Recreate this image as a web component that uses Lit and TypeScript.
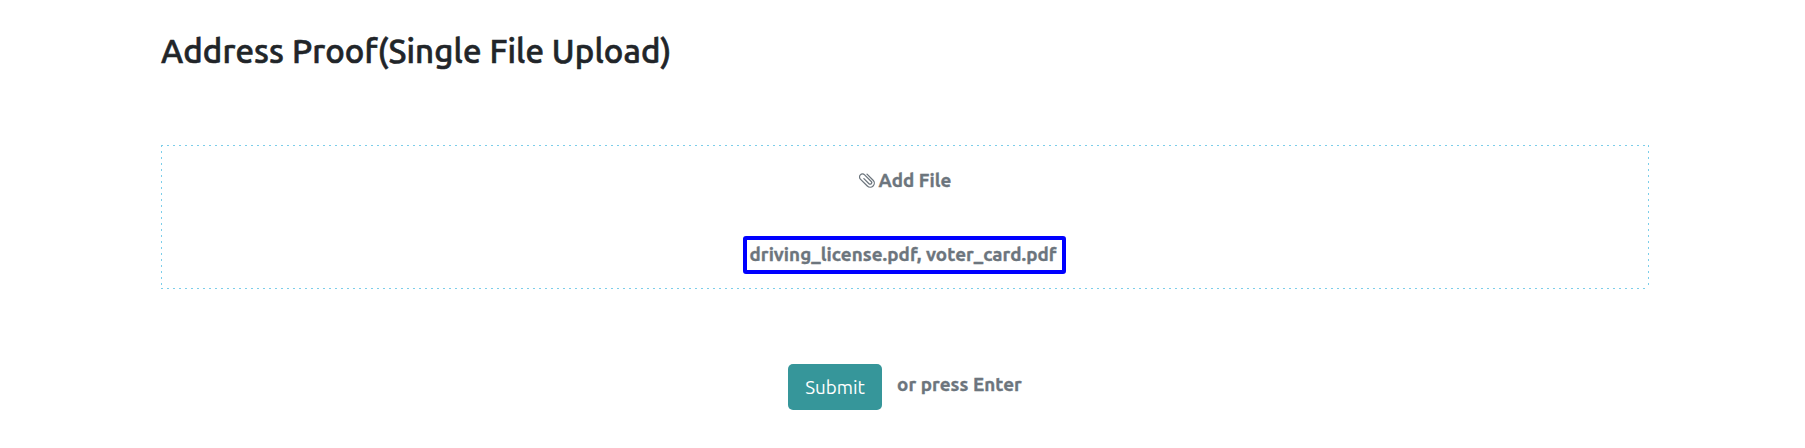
import { LitElement, html, css } from "lit";
import { customElement } from "lit/decorators.js";

@customElement("app-root")
export class AppRoot extends LitElement {
  static styles = css`
    :host {
      display: block;
      box-sizing: border-box;
      height: 448px;
      padding: 26px 156px 0 161px;
      background: #fff;
      color: #6c757d;
      font-family: Ubuntu, "Noto Sans", "Open Sans", sans-serif;
      overflow: hidden;
    }
    h2 {
      margin: 0;
      height: 119px;
      line-height: 50px;
      font-size: 33px;
      font-weight: 500;
      -webkit-text-stroke: 0.6px #212529;
      letter-spacing: 0.12px;
      color: #212529;
      white-space: nowrap;
    }
    .drop {
      box-sizing: border-box;
      height: 144px;
      display: flex;
      flex-direction: column;
      align-items: center;
      --dash: #7cceea;
      background:
        repeating-linear-gradient(90deg, var(--dash) 0 2px, transparent 2px 6px) top / 100% 1px no-repeat,
        repeating-linear-gradient(90deg, var(--dash) 0 2px, transparent 2px 6px) bottom / 100% 1px no-repeat,
        repeating-linear-gradient(180deg, var(--dash) 0 2px, transparent 2px 6px) left / 1px 100% no-repeat,
        repeating-linear-gradient(180deg, var(--dash) 0 2px, transparent 2px 6px) right / 1px 100% no-repeat;
    }
    .add,
    .files,
    .hint {
      font-size: 18.8px;
      font-weight: 700;
      letter-spacing: 0.08px;
      white-space: nowrap;
      -webkit-text-stroke: 0.35px #6c757d;
    }
    .add {
      display: flex;
      align-items: center;
      height: 30px;
      margin-top: 20px;
      gap: 4px;
    }
    .add svg { width: 16px; height: 16px; display: block; }
    .files {
      box-sizing: border-box;
      width: 323px;
      height: 38px;
      margin: 41px 2px 0 0;
      border: 4px solid #00f;
      border-radius: 3px;
      line-height: 29px;
      padding-left: 3px;
    }
    .actions {
      display: flex;
      margin: 75px 0 0 627px;
    }
    button {
      box-sizing: border-box;
      width: 94px;
      height: 46px;
      padding: 0;
      border: 0;
      border-radius: 5px;
      background: #36969a;
      color: #fff;
      font: 400 18.8px/46px Ubuntu, "Noto Sans", sans-serif;
    }
    .hint {
      margin-left: 15px;
      line-height: 41px;
    }
  `;

  render() {
    return html`
      <h2>Address Proof(Single File Upload)</h2>
      <div class="drop">
        <div class="add">
          <svg viewBox="0 0 16 16" fill="none" stroke="currentColor" stroke-width="1.25" stroke-linecap="round">
            <path transform="translate(7.8 8) rotate(-45)" d="M4.3-4V4.6a4.1 4.1 0 0 1-8.2 0V-5.2a3 3 0 0 1 6 0V4.2a1.6 1.6 0 0 1-3.2 0V-3"/>
          </svg>
          <span>Add File</span>
        </div>
        <div class="files">driving_license.pdf, voter_card.pdf</div>
      </div>
      <div class="actions">
        <button type="submit">Submit</button>
        <span class="hint">or press Enter</span>
      </div>
    `;
  }
}
